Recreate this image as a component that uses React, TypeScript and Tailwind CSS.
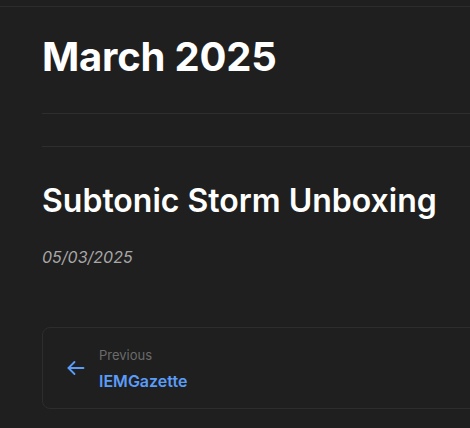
import React from "react";

export default function App() {
  return (
    <div className="h-[428px] w-[470px] overflow-hidden bg-[#1f1f1f]" style={{ fontFamily: "Inter, 'Noto Sans', sans-serif" }}>
      <div className="h-[6px]" />
      <div className="h-px w-full bg-[#2c2c2c]" />
      <div className="w-[600px] pl-[42px]">
        <h1 className="pt-[26px] text-[40px] font-bold leading-[48px] tracking-[-0.005em] text-white">March 2025</h1>
        <div className="mt-[32px] h-px bg-[#2e2e2e]" />
        <div className="mt-[32px] h-px bg-[#2e2e2e]" />
        <h2 className="mt-[34px] text-[32px] font-semibold leading-[40px] tracking-normal text-white">Subtonic Storm Unboxing</h2>
        <p className="mt-[26px] text-[16px] italic leading-[20px] text-[#a8a8a8]">05/03/2025</p>
        <div className="mt-[60px] flex h-[82px] items-center rounded-[8px] border border-[#2d2d2d] pl-[24px]">
          <svg width="18" height="16" viewBox="0 0 18 16" fill="none" stroke="#5b9cf8" strokeWidth="1.8" strokeLinecap="round" strokeLinejoin="round">
            <path d="M16.5 8H1.5" />
            <path d="M7.5 2L1.5 8l6 6" />
          </svg>
          <div className="ml-[14px] flex flex-col">
            <span className="text-[13px] leading-[18px] text-[#6b6b6b]">Previous</span>
            <span className="mt-[7px] text-[16px] font-semibold leading-[20px] text-[#5b9cf8]">IEMGazette</span>
          </div>
        </div>
      </div>
    </div>
  );
}
